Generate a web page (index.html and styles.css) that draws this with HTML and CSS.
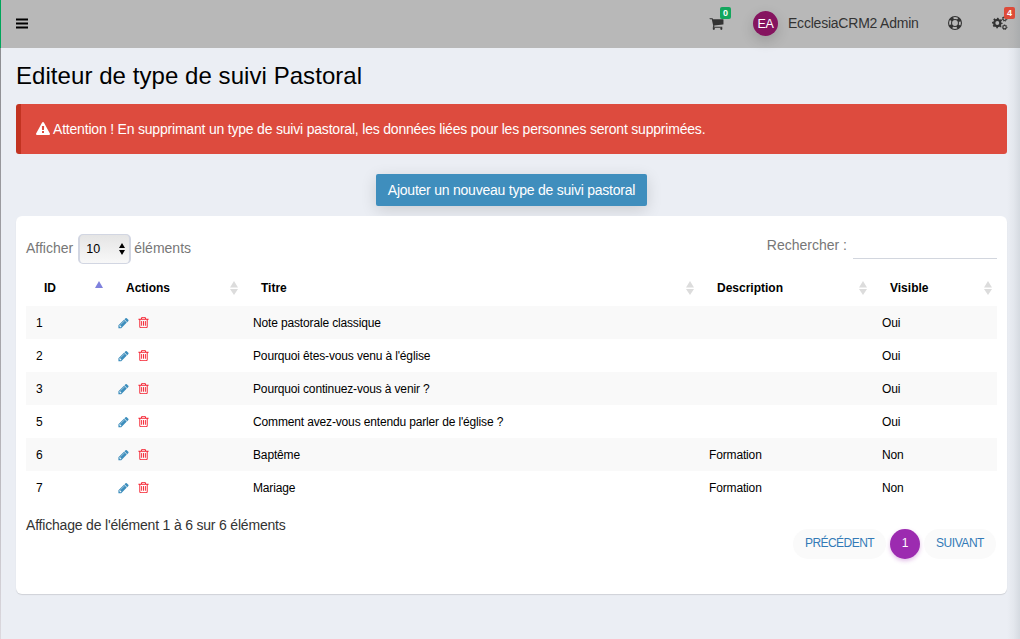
FILE: index.html
```html
<!DOCTYPE html>
<html lang="fr">
<head>
<meta charset="utf-8">
<title>Editeur de type de suivi Pastoral</title>
<link rel="stylesheet" href="styles.css">
</head>
<body>
<svg class="sprite" aria-hidden="true">
  <symbol id="pencil" viewBox="128 0 1664 1792"><path d="M491 1536l91-91-235-235-91 91v107h128v128h107zm523-928q0-22-22-22-10 0-17 7l-542 542q-7 7-7 17 0 22 22 22 10 0 17-7l542-542q7-7 7-17zm-54-192l416 416-832 832h-416v-416zm683 96q0 53-37 90l-166 166-416-416 166-165q36-38 90-38 53 0 91 38l235 234q37 39 37 91z"/></symbol>
  <symbol id="trash" viewBox="0 0 1792 1792"><path d="M704 736v576q0 14-9 23t-23 9h-64q-14 0-23-9t-9-23v-576q0-14 9-23t23-9h64q14 0 23 9t9 23zm256 0v576q0 14-9 23t-23 9h-64q-14 0-23-9t-9-23v-576q0-14 9-23t23-9h64q14 0 23 9t9 23zm256 0v576q0 14-9 23t-23 9h-64q-14 0-23-9t-9-23v-576q0-14 9-23t23-9h64q14 0 23 9t9 23zm128 724v-948h-896v948q0 22 7 40.5t14.5 27 10.5 8.5h832q3 0 10.5-8.5t14.5-27 7-40.5zm-672-1076h448l-48-117q-7-9-17-11h-317q-10 2-17 11zm928 32v64q0 14-9 23t-23 9h-96v948q0 83-47 143.5t-113 60.5h-832q-66 0-113-58.5t-47-141.5v-952h-96q-14 0-23-9t-9-23v-64q0-14 9-23t23-9h309l70-167q15-37 54-63t79-26h320q40 0 79 26t54 63l70 167h309q14 0 23 9t9 23z"/></symbol>
  <symbol id="sort" viewBox="0 0 8 14"><path d="M4 0L8 6.500H0zM0 8H8L4 14z"/></symbol>
</svg>
<header class="navbar">
  <svg class="bars" viewBox="0 0 12 11"><path d="M0 .5h12v2H0zM0 4.5h12v2H0zM0 8.5h12v2H0z"/></svg>
  <div class="cart">
    <svg viewBox="0 0 1792 1792"><path d="M704 1536q0 52-38 90t-90 38-90-38-38-90 38-90 90-38 90 38 38 90zm896 0q0 52-38 90t-90 38-90-38-38-90 38-90 90-38 90 38 38 90zm128-1088v512q0 24-16.500 42.500t-40.500 21.500l-1044 122q13 60 13 70 0 16-24 64h920q26 0 45 19t19 45-19 45-45 19h-1024q-26 0-45-19t-19-45q0-11 8-31.500t16-36 21.500-40 15.500-29.500l-177-823h-204q-26 0-45-19t-19-45 19-45 45-19h256q16 0 28.500 6.500t19.500 15.500 13 24.500 8 26 5.500 29.500 4.500 26h1201q26 0 45 19t19 45z"/></svg>
    <span class="badge green">0</span>
  </div>
  <span class="avatar">EA</span>
  <span class="user">EcclesiaCRM2 Admin</span>
  <svg class="ring" viewBox="0 0 14 14"><circle cx="7" cy="7" r="6.450"/><circle cx="7" cy="7" r="3.450"/><circle class="ring-pads" cx="7" cy="7" r="5"/></svg>
  <div class="cogs">
    <svg viewBox="0 0 16 14"><circle class="teeth" cx="5.300" cy="7" r="4.500"/><circle class="wheel" cx="5.300" cy="7" r="3.100"/><circle class="small-wheel" cx="12.600" cy="2.800" r="1.700"/><circle class="small-teeth" cx="12.600" cy="2.800" r="2.400"/><circle class="small-wheel" cx="12.600" cy="11.200" r="1.700"/><circle class="small-teeth" cx="12.600" cy="11.200" r="2.400"/></svg>
    <span class="badge red">4</span>
  </div>
</header>
<main class="content">
  <h1><span>Editeur de type de suivi Pastoral</span></h1>
  <div class="alert">
    <svg viewBox="0 0 1792 1792"><path d="M1024 1375v-190q0-14-9.500-23.500t-22.500-9.500h-192q-13 0-22.500 9.500t-9.500 23.500v190q0 14 9.500 23.500t22.500 9.500h192q13 0 22.500-9.500t9.500-23.500zm-2-374l18-459q0-12-10-19-13-11-24-11h-220q-11 0-24 11-10 7-10 21l17 457q0 10 10 16.500t24 6.500h185q14 0 23.500-6.500t10.500-16.500zm-14-934l768 1408q35 63-2 126-17 29-46.500 46t-63.500 17h-1536q-34 0-63.500-17t-46.500-46q-37-63-2-126l768-1408q17-31 47-49t65-18 65 18 47 49z"/></svg>
    <span>Attention ! En supprimant un type de suivi pastoral, les données liées pour les personnes seront supprimées.</span>
  </div>
  <button class="add"><span>Ajouter un nouveau type de suivi pastoral</span></button>
  <section class="card">
    <div class="tools">
      <div class="length"><span class="l1">Afficher</span><span class="select">10<svg viewBox="0 0 6 12"><path d="M3 0L6 5H0zM0 7H6L3 12z"/></svg></span><span class="l2">éléments</span></div>
      <label class="search"><span>Rechercher :</span><input type="text"></label>
    </div>
    <table>
      <colgroup><col class="c1"><col class="c2"><col class="c3"><col class="c4"><col class="c5"></colgroup>
      <thead><tr>
        <th><div><span>ID</span><svg class="asc" viewBox="0 0 8 14"><path d="M4 0L8 7H0z"/></svg></div></th>
        <th><div><span>Actions</span><svg><use href="#sort"/></svg></div></th>
        <th><div><span>Titre</span><svg><use href="#sort"/></svg></div></th>
        <th><div><span>Description</span><svg><use href="#sort"/></svg></div></th>
        <th><div><span>Visible</span><svg><use href="#sort"/></svg></div></th>
      </tr></thead>
      <tbody>
        <tr><td>1</td><td><div class="act"><svg class="edit"><use href="#pencil"/></svg><svg class="del"><use href="#trash"/></svg></div></td><td>Note pastorale classique</td><td></td><td>Oui</td></tr>
        <tr><td>2</td><td><div class="act"><svg class="edit"><use href="#pencil"/></svg><svg class="del"><use href="#trash"/></svg></div></td><td>Pourquoi êtes-vous venu à l'église</td><td></td><td>Oui</td></tr>
        <tr><td>3</td><td><div class="act"><svg class="edit"><use href="#pencil"/></svg><svg class="del"><use href="#trash"/></svg></div></td><td>Pourquoi continuez-vous à venir ?</td><td></td><td>Oui</td></tr>
        <tr><td>5</td><td><div class="act"><svg class="edit"><use href="#pencil"/></svg><svg class="del"><use href="#trash"/></svg></div></td><td>Comment avez-vous entendu parler de l'église ?</td><td></td><td>Oui</td></tr>
        <tr><td>6</td><td><div class="act"><svg class="edit"><use href="#pencil"/></svg><svg class="del"><use href="#trash"/></svg></div></td><td>Baptême</td><td>Formation</td><td>Non</td></tr>
        <tr><td>7</td><td><div class="act"><svg class="edit"><use href="#pencil"/></svg><svg class="del"><use href="#trash"/></svg></div></td><td>Mariage</td><td>Formation</td><td>Non</td></tr>
      </tbody>
    </table>
    <div class="foot">
      <span class="info">Affichage de l'élément 1 à 6 sur 6 éléments</span>
      <nav class="pager"><a class="prev">PRÉCÉDENT</a><a class="current">1</a><a class="next">SUIVANT</a></nav>
    </div>
  </section>
</main>
</body>
</html>
```
FILE: styles.css
```css
* { box-sizing: border-box; }
body {
  margin: 0;
  height: 639px;
  overflow: hidden;
  position: relative;
  background: #ebeef4;
  font: 14px/20px "Liberation Sans", Arial, sans-serif;
  color: #333;
}
body::before {
  content: "";
  position: absolute;
  left: 0; top: 0;
  width: 1px; height: 100%;
  background: linear-gradient(#00a65a 48px, #8e8e92 48px, #aaa9ae 60%, #dcd9df);
  z-index: 2;
}
body::after {
  content: "";
  position: absolute;
  right: 0; top: 0;
  width: 13px; height: 100%;
  background: linear-gradient(to right, rgba(90,105,115,0), rgba(90,105,115,.05) 50%, rgba(90,105,115,.15));
}
.sprite { position: absolute; width: 0; height: 0; }
svg { display: block; flex: none; fill: currentColor; }
h1 span, .alert span, .add span, .user, .info { white-space: nowrap; }

.navbar {
  height: 48px;
  padding: 0 13px 0 16px;
  background: #b8b8b8;
  display: flex;
  align-items: center;
}
.bars { width: 12px; height: 11px; margin-right: auto; margin-top: -2px; color: #000; }
.cart, .cogs { position: relative; }
.cart { margin-right: 29px; margin-top: -2px; }
.cart svg { width: 15px; height: 15px; }
.badge {
  position: absolute;
  z-index: 1;
  top: -9px;
  width: 11px; height: 12px;
  border-radius: 2px;
  color: #fff;
  font: bold 9px/12px "Liberation Sans", Arial, sans-serif;
  text-align: center;
}
.green { background: #13a65d; left: 11px; }
.red { background: #dd4b39; left: 12px; }
.avatar {
  width: 25px; height: 25px;
  margin-top: -1px;
  border-radius: 50%;
  background: #85145f;
  color: #fff;
  font-size: 12.500px;
  letter-spacing: -.3px;
  line-height: 26px;
  text-align: center;
  box-shadow: 0 5px 14px rgba(0,0,0,.16);
}
.user { width: 131px; margin: -2px 29px 0 10px; letter-spacing: -.22px; }
.ring { width: 14px; height: 14px; margin: -2px 30px 0 0; }
.ring circle { fill: none; stroke: #333; stroke-width: 1.100; }
.ring .ring-pads { stroke-width: 3; stroke-dasharray: 3.500 4.354; stroke-dashoffset: -2.177; }
.cogs { margin-right: -1px; margin-top: -2px; }
.cogs svg { width: 16px; height: 14px; }
.cogs circle { fill: none; stroke: #333; }
.cogs .wheel { stroke-width: 2.300; }
.cogs .teeth { stroke-width: 1.600; stroke-dasharray: 1.700 1.834; stroke-dashoffset: .85; }
.cogs .small-wheel { stroke-width: 1.100; }
.cogs .small-teeth { stroke-width: 1; stroke-dasharray: .9 .985; }

.content { padding: 13px 13px 0 16px; display: flex; flex-direction: column; }
h1 { margin: 0; font-size: 24px; line-height: 30px; letter-spacing: .06px; font-weight: 400; color: #000; }
.alert {
  margin-top: 13px;
  height: 50px;
  padding-left: 15px;
  border-left: 5px solid #c23321;
  border-radius: 3px;
  background: #dd4b3e;
  color: #fff;
  letter-spacing: -.2px;
  display: flex;
  align-items: center;
  gap: 3px;
}
.alert svg { width: 14px; height: 14px; }
.add {
  align-self: center;
  width: 271px; height: 32px;
  margin: 20px 0 10px;
  padding: 0;
  border: 0;
  border-radius: 2px;
  background: #3f8ebd;
  color: #fff;
  font: inherit;
  letter-spacing: -.23px;
  box-shadow: 0 4px 16px rgba(0,0,0,.14);
}
.card {
  position: relative;
  height: 378px;
  padding: 18px 10px 0;
  border-radius: 6px;
  background: #fff;
  box-shadow: 0 1px 1px rgba(0,0,0,.12);
}
.tools { display: flex; justify-content: space-between; height: 35px; color: #777; }
.length { display: flex; height: 30px; align-items: center; }
.l1, .l2 { margin-top: -2px; }
.select {
  width: 53px; height: 30px;
  margin: 0 3px 0 5px;
  padding: 0 4px 0 6px;
  border: 1px solid #d2d6e2;
  border-width: 1px 2px;
  border-radius: 5px;
  background: linear-gradient(#e5e5e5, #f8f8f8);
  color: #000;
  font-size: 12.500px;
  display: flex;
  align-items: center;
  justify-content: space-between;
}
.select svg { width: 6px; height: 12px; }
.search { display: flex; gap: 6px; height: 25px; }
.search span { margin-top: 1px; }
.search input { width: 144px; padding: 0; border: 0; border-bottom: 1px solid #d2d6de; background: none; outline: none; }

table { width: 971px; table-layout: fixed; border-collapse: collapse; color: #000; font-size: 12px; }
.c1 { width: 82px; } .c2 { width: 135px; } .c3 { width: 456px; } .c4 { width: 173px; } .c5 { width: 125px; }
th { height: 37px; padding: 0 5px 0 18px; text-align: left; }
th div { display: flex; justify-content: space-between; align-items: center; }
th svg { width: 8px; height: 14px; color: #dcdcdc; }
th .asc { color: #7f81dd; }
td { height: 33px; padding: 0 10px; white-space: nowrap; letter-spacing: -.15px; }
tbody tr:nth-child(odd) { background: #f9f9f9; }
.act { display: flex; align-items: center; gap: 7px; }
.act svg { width: 12px; height: 12px; }
.edit { color: #3c8dbc; }
.act .del { width: 13px; height: 13px; color: #f5202f; }

.foot { display: flex; justify-content: space-between; padding-top: 11px; }
.info { letter-spacing: -.19px; }
.pager { display: flex; margin: 14px 1px 0 0; font-size: 12px; line-height: 29px; text-align: center; color: #337ab7; }
.pager a { height: 30px; border-radius: 15px; background: #fafafa; }
.prev { width: 93px; letter-spacing: -.55px; }
.current { width: 30px; margin: 0 4px; }
.pager .current { background: #9c2bb0; color: #fff; box-shadow: 0 2px 4px rgba(156,39,176,.3); }
.next { width: 72px; letter-spacing: -.45px; }
```
